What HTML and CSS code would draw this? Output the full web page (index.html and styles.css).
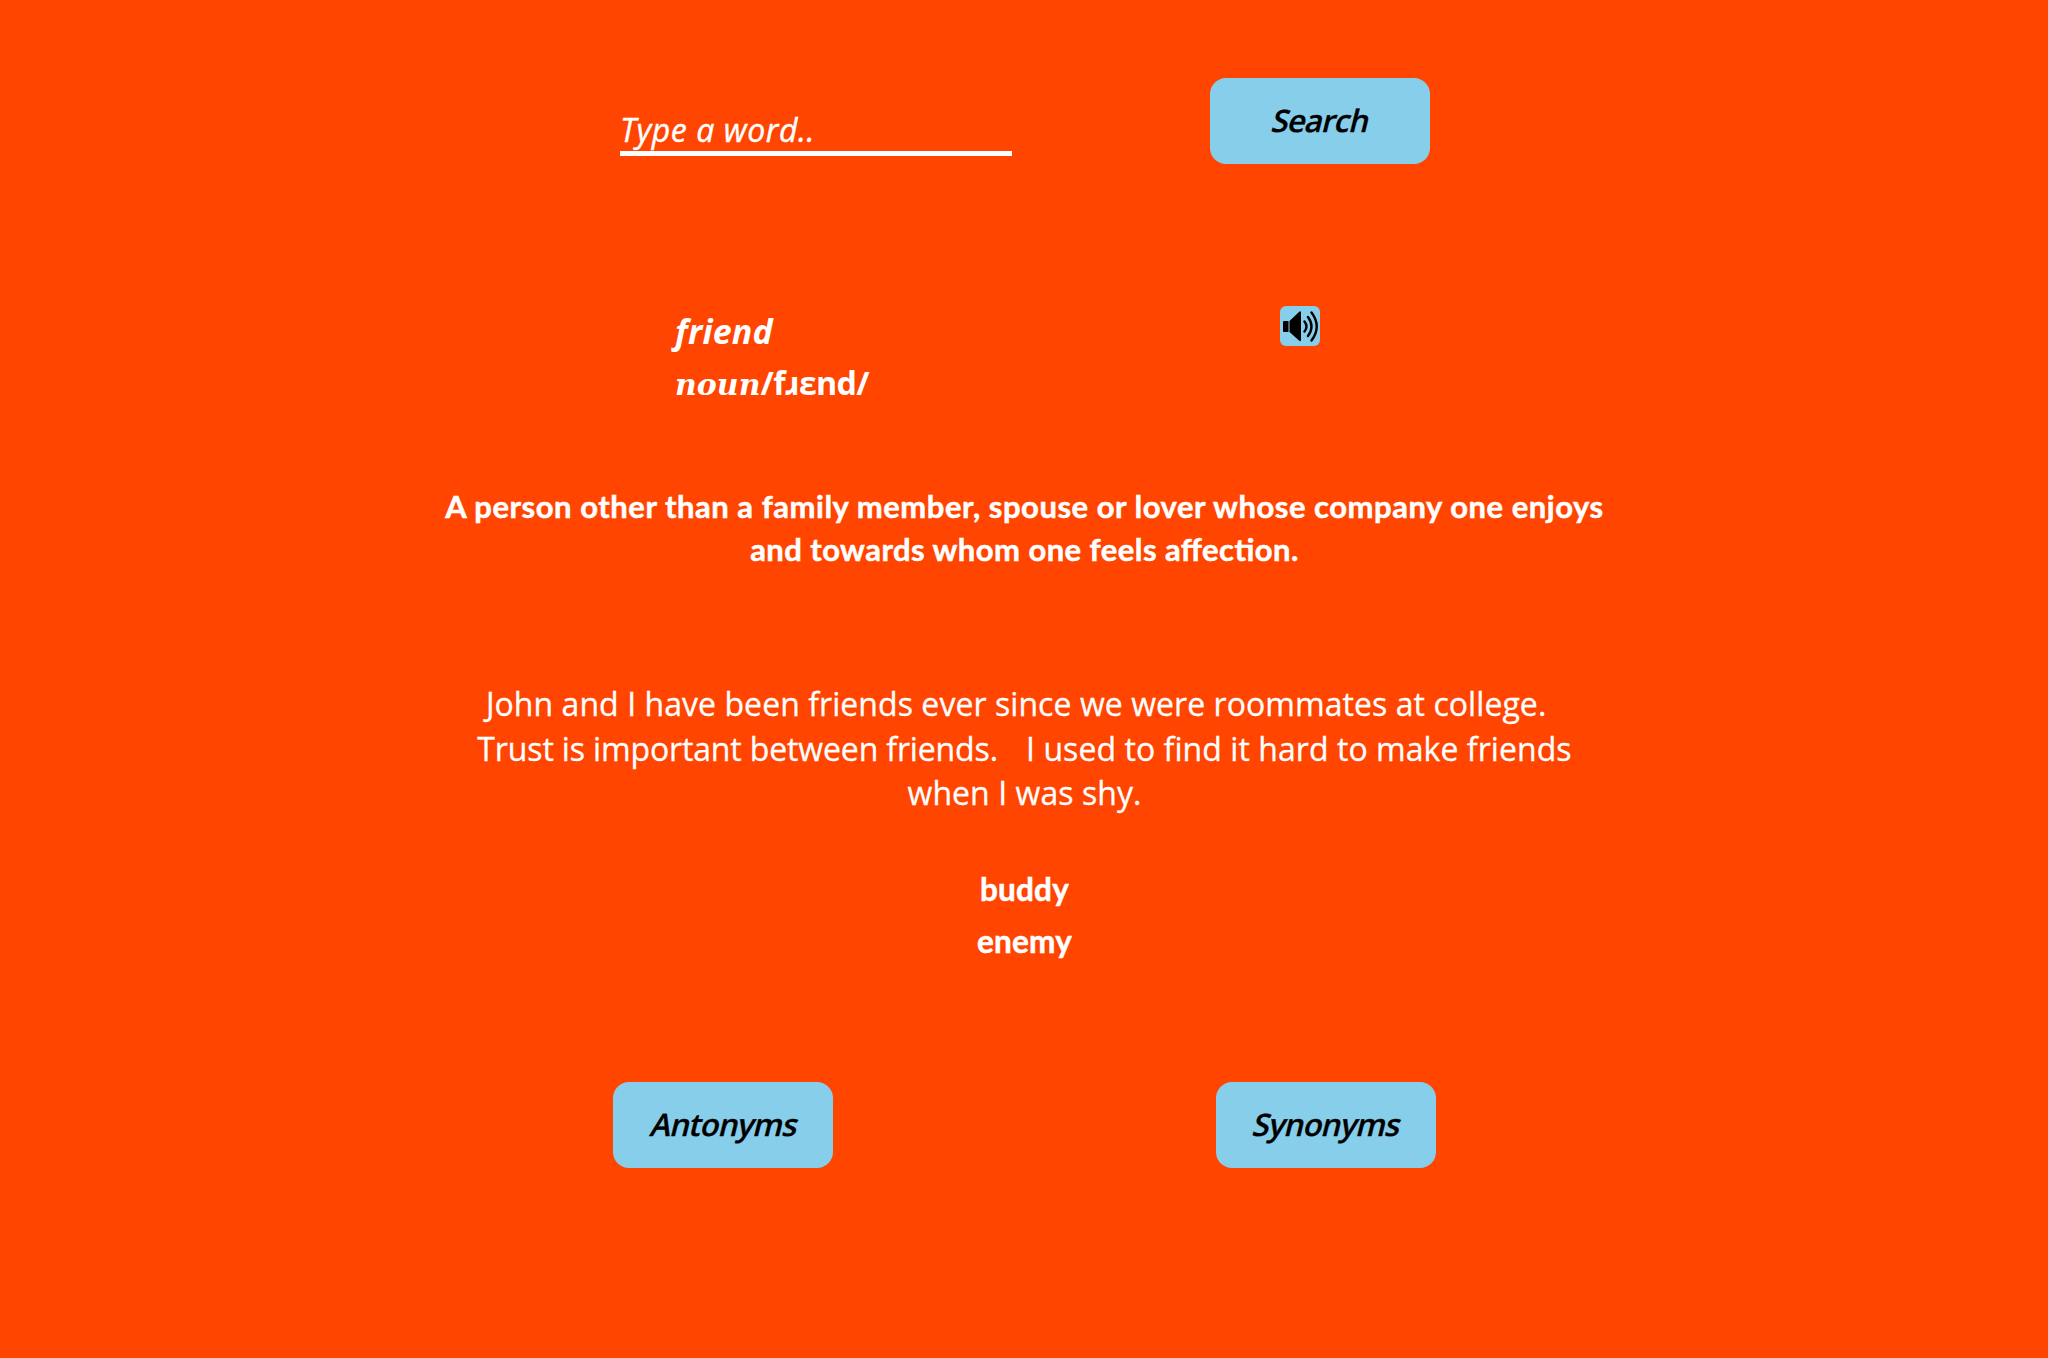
FILE: index.html
```html
<!DOCTYPE html>
<html lang="en">
<head>
<meta charset="utf-8">
<title>Dictionary</title>
<link rel="stylesheet" href="styles.css">
</head>
<body>
<main class="dictionary">
  <form class="search">
    <div class="field">Type a word..</div>
    <button type="button" class="btn"><span class="label">Search</span></button>
  </form>
  <section class="entry">
    <div class="headword">
      <h1 class="word">friend</h1>
      <p class="phonetic"><span class="pos">noun</span><span class="ipa">/fɹɛnd/</span></p>
    </div>
    <button type="button" class="sound" aria-label="Play">
      <svg viewBox="0 0 40 40" width="40" height="40"><path d="M4 15h4.500v11H4a1 1 0 0 1-1-1v-9a1 1 0 0 1 1-1zM9.500 15 19 6q2-1.500 2 .5V34q0 2-2 .5L9.500 26z"/><path class="wave" d="M24.500 15.500q4 5 0 10M28 11q7 9.500 0 19M31.500 6.500q10.500 14 0 28"/></svg>
    </button>
  </section>
  <p class="definition">A person other than a family member, spouse or lover whose company one enjoys<br><span class="last">and towards whom one feels affection.</span></p>
  <p class="example">John and I have been friends ever since we were roommates at college.&nbsp;&nbsp;<br><span class="tight">Trust is important between friends.</span><span class="gap"> &nbsp; </span>I used to find it hard to make friends<br>when I was shy.</p>
  <p class="related">buddy<br>enemy</p>
  <div class="actions">
    <button type="button" class="btn"><span class="label">Antonyms</span></button>
    <button type="button" class="btn"><span class="label">Synonyms</span></button>
  </div>
</main>
</body>
</html>
```

FILE: styles.css
```css
* { box-sizing: border-box; margin: 0; padding: 0; }
body { background: #ff4500; color: #fff; font-family: "Open Sans", sans-serif; }
.dictionary { display: flex; flex-direction: column; height: 1358px; padding-top: 78px; }
.search { display: flex; justify-content: space-between; width: 810px; height: 86px; margin-left: 620px; }
.field { width: 392px; height: 78px; border-bottom: 5px solid #fff; padding-top: 30px; font-size: 32px; line-height: 43px; font-style: italic; letter-spacing: .55px; -webkit-text-stroke: .4px #fff; }
.btn { width: 220px; height: 86px; border: 0; border-radius: 16px; background: #87ceeb; color: #000; font: 600 31px/44px "Open Sans", sans-serif; letter-spacing: -.8px; padding: 0 0 2px 3px; -webkit-text-stroke: .3px #000; }
.label { display: inline-block; transform: skewX(-14deg); }
.entry { display: flex; justify-content: space-between; width: 645px; margin: 142px 0 0 675px; }
.word { margin-top: 1px; font-size: 34px; line-height: 48px; font-style: italic; letter-spacing: .2px; }
.phonetic { height: 44px; font-size: 32px; line-height: 44px; font-weight: 700; margin-top: 6px; }
.pos { font-family: "DejaVu Serif", serif; font-style: italic; font-size: 30px; }
.ipa { font-family: "Noto Sans", sans-serif; letter-spacing: -.5px; }
.sound { width: 40px; height: 40px; border: 0; border-radius: 6px; background: #87ceeb; }
.sound svg { display: block; }
.wave { fill: none; stroke: #000; stroke-width: 2.4; stroke-linecap: round; }
.definition { margin-top: 80px; padding-left: 1px; text-align: center; font: 700 31px/43px Lato, sans-serif; letter-spacing: .53px; font-feature-settings: "liga" 1; -webkit-text-stroke: .5px #fff; }
.last { letter-spacing: .45px; }
.example { margin-top: 111px; padding-left: 1px; text-align: center; font-size: 32px; line-height: 44.500px; letter-spacing: .06px; -webkit-text-stroke: .3px #fff; }
.tight { letter-spacing: -.14px; }
.gap { word-spacing: 1px; }
.related { margin-top: 47px; padding-left: 1px; text-align: center; font: 700 31.500px/52px Lato, sans-serif; letter-spacing: .2px; -webkit-text-stroke: .5px #fff; }
.actions { display: flex; justify-content: space-between; width: 823px; margin: 115px 0 0 613px; }
```
